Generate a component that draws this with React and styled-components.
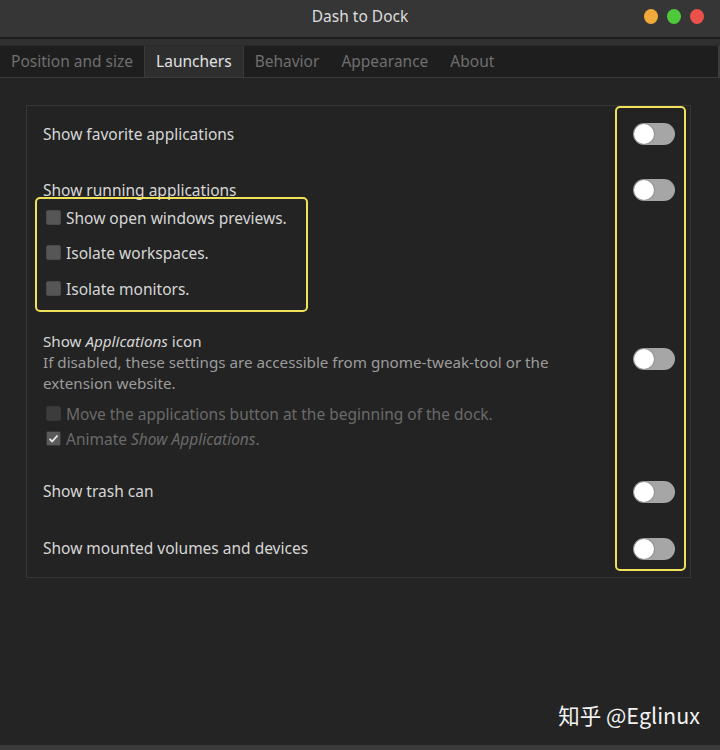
import React from "react";
import styled, { createGlobalStyle } from "styled-components";

const Global = createGlobalStyle`
  html, body { margin: 0; padding: 0; background: #242424; }
  body { font-family: "Noto Sans", "Noto Sans CJK SC", sans-serif; }
  * { box-sizing: border-box; }
`;

const Window = styled.div`
  width: 720px;
  height: 750px;
  background: #242424;
  display: flex;
  flex-direction: column;
  position: relative;
  border-bottom: 5px solid #3a3a3a;
`;

const TitleBar = styled.div`
  height: 39px;
  background: #363636;
  border-bottom: 2px solid #1c1c1c;
  display: flex;
  align-items: center;
  justify-content: center;
  position: relative;
  flex-shrink: 0;
`;

const Title = styled.div`
  color: #dedede;
  font-size: 15.5px;
  margin-top: -6px;
`;

const Dots = styled.div`
  position: absolute;
  right: 16px;
  top: 9px;
  display: flex;
  gap: 9px;
`;

const Dot = styled.span`
  width: 14px;
  height: 15px;
  border-radius: 50%;
  background: ${(p) => p.$c};
`;

const Spacer = styled.div`
  height: 6px;
  background: #303030;
  flex-shrink: 0;
`;

const TabBar = styled.div`
  height: 33px;
  background: #1e1e1e;
  border-top: 1px solid #2a2a2a;
  border-bottom: 1px solid #3a3a3a;
  border-right: 2px solid #3c3c3c;
  display: flex;
  flex-shrink: 0;
`;

const Tab = styled.div`
  padding: 0 11px 1px;
  display: flex;
  align-items: center;
  font-size: 15.5px;
  color: ${(p) => (p.$active ? "#e2e2e2" : "#6f6f6f")};
  background: ${(p) => (p.$active ? "#2e2e2e" : "transparent")};
  border-left: ${(p) => (p.$active ? "1px solid #3a3a3a" : "none")};
  border-right: ${(p) => (p.$active ? "1px solid #3a3a3a" : "none")};
`;

const Body = styled.div`
  flex: 1;
  padding: 27px 29px 0 26px;
  position: relative;
`;

const Frame = styled.div`
  position: relative;
  border: 1px solid #363636;
  background: #232323;
  padding: 0 16px;
  display: flex;
  flex-direction: column;
`;

const Row = styled.div`
  display: flex;
  align-items: ${(p) => (p.$end ? "flex-end" : "center")};
  justify-content: space-between;
  flex-shrink: 0;
  height: ${(p) => p.$h}px;
  margin-top: ${(p) => p.$mt || 0}px;
`;

const Label = styled.div`
  color: #d6d6d6;
  font-size: 15.5px;
  line-height: 19px;
  white-space: nowrap;
`;

const Stack = styled.div`
  display: flex;
  flex-direction: column;
`;

const StackTitle = styled.div`
  color: #d6d6d6;
  font-size: 15.2px;
  line-height: 21px;
  white-space: nowrap;
`;

const Desc = styled.div`
  color: #9c9c9c;
  font-size: 15.2px;
  line-height: 21px;
  white-space: nowrap;
`;

const Toggle = styled.div`
  width: 42px;
  height: 22px;
  border-radius: 11px;
  background: #a6a6a6;
  position: relative;
  margin-right: -1px;
  margin-top: ${(p) => p.$shift || 0}px;
  margin-bottom: ${(p) => p.$drop || 0}px;
  flex-shrink: 0;
  &::after {
    content: "";
    position: absolute;
    left: 1px;
    top: 1px;
    width: 20px;
    height: 20px;
    border-radius: 50%;
    background: #ffffff;
    box-shadow: 0 0 2px rgba(0, 0, 0, 0.4);
  }
`;

const CheckRow = styled.div`
  display: flex;
  align-items: center;
  gap: 5px;
  flex-shrink: 0;
  height: ${(p) => p.$h}px;
  margin-top: ${(p) => p.$mt || 0}px;
  padding-left: 3px;
`;

const Box = styled.span`
  width: 15px;
  height: 15px;
  border-radius: 2px;
  background: ${(p) => (p.$checked ? "#5a5a5a" : p.$disabled ? "#3c3c3c" : "#565656")};
  border: 1px solid ${(p) => (p.$disabled ? "#363636" : "#4a4a4a")};
  display: flex;
  align-items: center;
  justify-content: center;
  flex-shrink: 0;
`;

const CheckLabel = styled.span`
  font-size: 15.5px;
  white-space: nowrap;
  color: ${(p) => (p.$disabled ? "#6a6a6a" : "#d6d6d6")};
`;

const Highlight = styled.div`
  position: absolute;
  border: 2.5px solid #efe15a;
  border-radius: 5px;
  pointer-events: none;
`;

const Watermark = styled.div`
  position: absolute;
  right: 20px;
  bottom: 15px;
  color: #f2f2f2;
  font-size: 21.5px;
  font-family: "Noto Sans CJK SC", "Noto Sans", sans-serif;
`;

const Check = () => (
  <svg width="11" height="11" viewBox="0 0 11 11">
    <path d="M1.5 5.8 L4.2 8.4 L9.5 2.5" stroke="#e6e6e6" strokeWidth="1.8" fill="none" />
  </svg>
);

export default function App() {
  return (
    <>
      <Global />
      <Window>
        <TitleBar>
          <Title>Dash to Dock</Title>
          <Dots>
            <Dot $c="#f0a93a" />
            <Dot $c="#4fc93c" />
            <Dot $c="#e9514a" />
          </Dots>
        </TitleBar>
        <Spacer />
        <TabBar>
          <Tab>Position and size</Tab>
          <Tab $active>Launchers</Tab>
          <Tab>Behavior</Tab>
          <Tab>Appearance</Tab>
          <Tab>About</Tab>
        </TabBar>
        <Body>
          <Frame>
            <Row $h={56}>
              <Label>Show favorite applications</Label>
              <Toggle />
            </Row>
            <Row $h={38} $end>
              <Label>Show running applications</Label>
              <Toggle $drop={-1} />
            </Row>
            <CheckRow $h={35}>
              <Box />
              <CheckLabel>Show open windows previews.</CheckLabel>
            </CheckRow>
            <CheckRow $h={35}>
              <Box />
              <CheckLabel>Isolate workspaces.</CheckLabel>
            </CheckRow>
            <CheckRow $h={37}>
              <Box />
              <CheckLabel>Isolate monitors.</CheckLabel>
            </CheckRow>
            <Row $h={63} $mt={24}>
              <Stack>
                <StackTitle>
                  Show <i>Applications</i> icon
                </StackTitle>
                <Desc>If disabled, these settings are accessible from gnome-tweak-tool or the</Desc>
                <Desc>extension website.</Desc>
              </Stack>
              <Toggle $shift={-7} />
            </Row>
            <CheckRow $h={25} $mt={7}>
              <Box $disabled />
              <CheckLabel $disabled>Move the applications button at the beginning of the dock.</CheckLabel>
            </CheckRow>
            <CheckRow $h={25}>
              <Box $disabled $checked>
                <Check />
              </Box>
              <CheckLabel $disabled>
                Animate <i>Show Applications</i>.
              </CheckLabel>
            </CheckRow>
            <Row $h={57} $mt={12}>
              <Label>Show trash can</Label>
              <Toggle />
            </Row>
            <Row $h={57}>
              <Label>Show mounted volumes and devices</Label>
              <Toggle />
            </Row>
            <Highlight style={{ left: 8, top: 91, width: 273, height: 115 }} />
            <Highlight style={{ left: 588, top: 0, width: 71, height: 465 }} />
          </Frame>
          <Watermark>知乎 @Eglinux</Watermark>
        </Body>
      </Window>
    </>
  );
}
